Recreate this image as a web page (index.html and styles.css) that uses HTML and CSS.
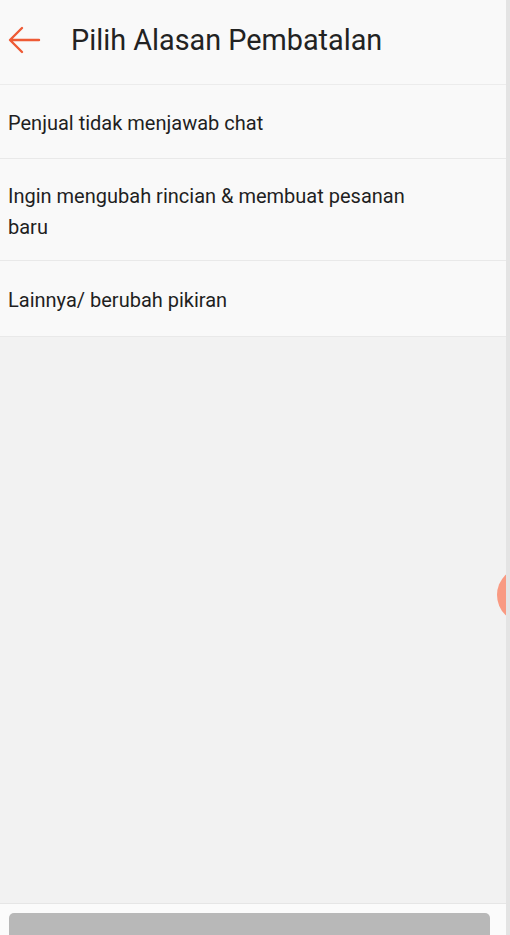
FILE: index.html
```html
<!DOCTYPE html>
<html lang="id">
<head>
<meta charset="utf-8">
<title>Pilih Alasan Pembatalan</title>
<link rel="stylesheet" href="styles.css">
</head>
<body>
<div class="screen">
  <header class="topbar">
    <svg class="back" width="34" height="30" viewBox="0 0 34 30" aria-hidden="true">
      <path d="M32 15H4M15 3L3 15L15 27" fill="none" stroke="#ee5a35" stroke-width="2.4" stroke-linecap="round" stroke-linejoin="round"/>
    </svg>
    <h1 class="title">Pilih Alasan Pembatalan</h1>
  </header>
  <ul class="reasons">
    <li class="reason reason-first">Penjual tidak menjawab chat</li>
    <li class="reason reason-two">Ingin mengubah rincian &amp; membuat pesanan<br>baru</li>
    <li class="reason reason-last">Lainnya/ berubah pikiran</li>
  </ul>
  <div class="fill"></div>
  <footer class="bottom">
    <button class="confirm">Kirim Pembatalan Pesanan</button>
  </footer>
  <div class="bubble"></div>
  <div class="edge"></div>
</div>
</body>
</html>
```
FILE: styles.css
```css
* { box-sizing: border-box; }
html, body { margin: 0; padding: 0; }
body {
  font-family: Roboto, "Noto Sans", "Liberation Sans", sans-serif;
  background: #f1f1f1;
  color: #202020;
}
.screen {
  position: relative;
  width: 510px;
  height: 935px;
  overflow: hidden;
  display: flex;
  flex-direction: column;
  background: #f2f2f2;
}
.topbar {
  height: 85px;
  flex: none;
  display: flex;
  align-items: center;
  background: #f9f9f9;
  border-bottom: 1px solid #ececec;
  padding-left: 7px;
  padding-bottom: 4px;
}
.back { flex: none; }
.title {
  margin: 0 0 0 30px;
  font-size: 28.8px;
  font-weight: 400;
  color: #222;
}
.reasons {
  list-style: none;
  margin: 0;
  padding: 0;
  background: #f9f9f9;
}
.reason {
  font-size: 20px;
  line-height: 31px;
  padding: 0 8px;
  color: #1f1f1f;
  border-bottom: 1px solid #e9e9e9;
}
.reason-first { padding-top: 23px; padding-bottom: 19px; }
.reason-two { padding-top: 22px; padding-bottom: 17px; }
.reason-last { padding-top: 24px; padding-bottom: 20px; }
.fill { flex: 1; }
.bottom {
  height: 32px;
  flex: none;
  background: #fbfbfb;
  border-top: 1px solid #e6e6e6;
  padding: 9px 20px 0 9px;
}
.confirm {
  display: block;
  width: 100%;
  height: 50px;
  border: 0;
  border-radius: 5px 5px 0 0;
  background: #b8b8b8;
  color: #fff;
  font-family: inherit;
  font-size: 20px;
  padding-top: 16px;
  text-align: center;
}
.bubble {
  position: absolute;
  left: 497px;
  top: 567px;
  width: 56px;
  height: 56px;
  border-radius: 50%;
  background: #f99a82;
}
.edge {
  position: absolute;
  right: 0;
  top: 0;
  width: 4px;
  height: 935px;
  background: #e4e4e4;
}
```
